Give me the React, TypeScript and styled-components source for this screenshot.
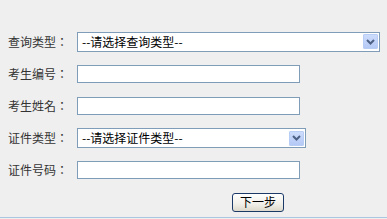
import React from 'react';
import styled, { createGlobalStyle } from 'styled-components';

const GlobalStyle = createGlobalStyle`
    html, body {
        margin: 0;
        padding: 0;
        background-color: #efefef;
    }
    body {
        font-family: "Noto Sans CJK SC", "Liberation Sans", sans-serif;
        font-size: 12px;
    }
`;

const Page = styled.div`
    height: 218px;
    border-bottom: 1px solid #aac7df;
    padding-top: 25px;
    box-sizing: border-box;
`;

const Row = styled.div<{ height?: number }>`
    display: flex;
    align-items: center;
    height: ${(props) => props.height || 32}px;
`;

// TC variant keeps the full-width colon centred in its cell, like the reference
const Label = styled.div`
    width: 69px;
    padding-left: 8px;
    color: #333;
    font-family: "Noto Sans CJK TC", "Noto Sans CJK SC", sans-serif;
    font-size: 12px;
    white-space: nowrap;
    line-height: 1;
`;

const Field = styled.div`
    flex: 1;
    display: flex;
    align-items: center;
`;

const TextInput = styled.input`
    width: 223px;
    height: 18px;
    box-sizing: border-box;
    border: 1px solid #7f9db9;
    background: #fff;
    padding: 0 3px;
    margin: 0;
    outline: none;
    font: inherit;
`;

const SelectBox = styled.div<{ width: number }>`
    width: ${(props) => props.width}px;
    height: 20px;
    box-sizing: border-box;
    border: 1px solid #7f9db9;
    background: #fff;
    display: flex;
    align-items: center;
    justify-content: space-between;
    padding: 0 1px 0 4px;
`;

const SelectText = styled.span`
    color: #000;
    font-size: 12px;
    line-height: 1;
    white-space: nowrap;
`;

const ArrowButton = styled.span`
    width: 15px;
    height: 15px;
    box-sizing: border-box;
    border: 1px solid #b8cdf6;
    border-radius: 1px;
    background: linear-gradient(#cddcfc, #b4c9f5);
    display: flex;
    align-items: center;
    justify-content: center;
`;

const SubmitButton = styled.button`
    margin-left: 232px;
    width: 52px;
    height: 19px;
    box-sizing: border-box;
    border: 1px solid #1c3a68;
    border-radius: 3px;
    background: linear-gradient(#ffffff, #f0efe8 60%, #dcd9cc);
    font: inherit;
    font-size: 12px;
    color: #000;
    padding: 0;
    line-height: 1;
    cursor: pointer;
`;

const Chevron = () => (
    <svg width="9" height="6" viewBox="0 0 9 6">
        <path d="M1 1 L4.5 4.5 L8 1" fill="none" stroke="#4d6185" strokeWidth="2" />
    </svg>
);

const Select: React.FC<{ width: number; text: string }> = ({ width, text }) => (
    <SelectBox width={width}>
        <SelectText>{text}</SelectText>
        <ArrowButton><Chevron /></ArrowButton>
    </SelectBox>
);

const App: React.FC = () => {
    return (
        <>
            <GlobalStyle />
            <Page>
                <Row height={33}>
                    <Label>查询类型：</Label>
                    <Field><Select width={303} text="--请选择查询类型--" /></Field>
                </Row>
                <Row height={32}>
                    <Label>考生编号：</Label>
                    <Field><TextInput /></Field>
                </Row>
                <Row height={32}>
                    <Label>考生姓名：</Label>
                    <Field><TextInput /></Field>
                </Row>
                <Row height={32}>
                    <Label>证件类型：</Label>
                    <Field><Select width={229} text="--请选择证件类型--" /></Field>
                </Row>
                <Row height={32}>
                    <Label>证件号码：</Label>
                    <Field><TextInput /></Field>
                </Row>
                <Row height={32}>
                    <SubmitButton>下一步</SubmitButton>
                </Row>
            </Page>
        </>
    );
};

export default App;
